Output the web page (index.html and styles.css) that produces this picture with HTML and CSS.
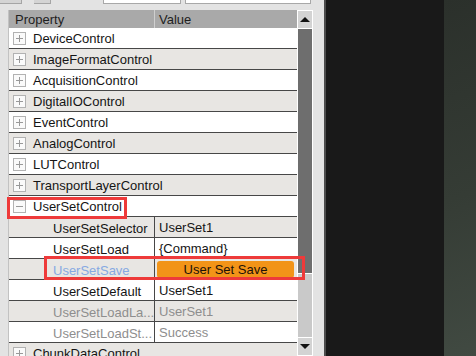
FILE: index.html
```html
<!DOCTYPE html>
<html lang="en">
<head>
    <meta charset="UTF-8">
    <title>Property Grid</title>
    <link rel="stylesheet" href="styles.css">
</head>
<body>
    <div class="screen">
        <div class="panel">
            <div class="toolbar">
                <span class="tb-btn btn-a"></span>
                <span class="tb-btn btn-b"></span>
                <span class="tb-input input-a"></span>
                <span class="tb-input input-b"></span>
            </div>
            <div class="grid-wrap">
                <div class="grid">
                    <div class="grid-head">
                        <span class="head-name">Property</span>
                        <span class="head-value">Value</span>
                    </div>
                    <div class="row group"><span class="expander plus"></span><span class="label">DeviceControl</span></div>
                    <div class="row group"><span class="expander plus"></span><span class="label">ImageFormatControl</span></div>
                    <div class="row group"><span class="expander plus"></span><span class="label">AcquisitionControl</span></div>
                    <div class="row group"><span class="expander plus"></span><span class="label">DigitalIOControl</span></div>
                    <div class="row group"><span class="expander plus"></span><span class="label">EventControl</span></div>
                    <div class="row group"><span class="expander plus"></span><span class="label">AnalogControl</span></div>
                    <div class="row group"><span class="expander plus"></span><span class="label">LUTControl</span></div>
                    <div class="row group"><span class="expander plus"></span><span class="label">TransportLayerControl</span></div>
                    <div class="row group"><span class="expander"></span><span class="label">UserSetControl</span></div>
                    <div class="row child"><span class="name">UserSetSelector</span><span class="value">UserSet1</span></div>
                    <div class="row child"><span class="name">UserSetLoad</span><span class="value">{Command}</span></div>
                    <div class="row child"><span class="name selected">UserSetSave</span><span class="value"><button class="cmd-button">User Set Save</button></span></div>
                    <div class="row child"><span class="name">UserSetDefault</span><span class="value">UserSet1</span></div>
                    <div class="row child readonly"><span class="name">UserSetLoadLa...</span><span class="value">UserSet1</span></div>
                    <div class="row child readonly"><span class="name">UserSetLoadSt...</span><span class="value">Success</span></div>
                    <div class="row group"><span class="expander plus"></span><span class="label">ChunkDataControl</span></div>
                </div>
                <div class="scrollbar">
                    <div class="sb-button"><span class="arrow-up"></span></div>
                    <div class="sb-thumb"></div>
                    <div class="sb-track"></div>
                    <div class="sb-button"><span class="arrow-down"></span></div>
                </div>
            </div>
            <div class="mark mark-group"></div>
            <div class="mark mark-save"></div>
        </div>
        <div class="split"></div>
        <div class="dark"></div>
        <div class="desk"></div>
    </div>
</body>
</html>
```

FILE: styles.css
```css
body {
    margin: 0;
    font-family: 'Liberation Sans', Arial, sans-serif;
    font-size: 13px;
    color: #151515;
    overflow: hidden;
}

.screen {
    display: flex;
    width: 476px;
    height: 356px;
    overflow: hidden;
}

.panel {
    position: relative;
    width: 324px;
    background: #e3e3e3;
}

.split {
    width: 2px;
    background: #4d4d4d;
}

.dark {
    width: 118px;
    background: #191919;
}

.desk {
    flex: 1;
    background: linear-gradient(160deg, #2b302b 0%, #353c35 55%, #414a42 100%);
}

/* clipped toolbar at the top */
.toolbar {
    display: flex;
    height: 5px;
    margin-bottom: 5px;
}

.tb-btn {
    height: 3px;
    background: #d4d4d4;
    border-right: 1px solid #a5a5a5;
    border-bottom: 1px solid #a5a5a5;
}

.btn-a { width: 21px; }
.btn-b { width: 16px; margin-left: 12px; }

.tb-input {
    height: 3px;
    background: #fff;
    border: 1px solid #a8a8a8;
    border-top: none;
}

.input-a { width: 76px; margin-left: 52px; }
.input-b { width: 124px; margin-left: 4px; }

/* property grid */
.grid-wrap {
    display: flex;
    padding-left: 8px;
    height: 346px;
    overflow: hidden;
}

.grid {
    width: 288px;
    border-left: 1px solid #c2c2c2;
}

.grid-head {
    display: flex;
    height: 18px;
    line-height: 19px;
    background: #a9a9a9;
    color: #1e1e1e;
}

.head-name {
    width: 139px;
    padding-left: 6px;
    border-right: 1px solid #cfcfcf;
}

.head-value {
    padding-left: 4px;
}

.row {
    display: flex;
    align-items: center;
    height: 20px;
    line-height: 21px;
    background: #fff;
    border-bottom: 1px solid #474747;
    white-space: nowrap;
}

.row:nth-child(odd) {
    background: #e8e6e3;
}

.label {
    padding-top: 1px;
}

.expander {
    position: relative;
    box-sizing: border-box;
    width: 13px;
    height: 13px;
    margin: 0 7px 0 4px;
    border: 1px solid #b2b2b2;
    background: #fafafa;
}

.expander::before,
.expander::after {
    content: "";
    position: absolute;
    background: #999;
}

.expander::before {
    left: 2px;
    top: 5px;
    width: 7px;
    height: 1px;
}

.plus.expander::after {
    left: 5px;
    top: 2px;
    width: 1px;
    height: 7px;
}

.expander:not(.plus)::after {
    display: none;
}

.name {
    box-sizing: border-box;
    width: 146px;
    padding-left: 44px;
    padding-top: 1px;
    border-right: 1px solid #474747;
    overflow: hidden;
    align-self: stretch;
}

.name.selected {
    color: #86a9e2;
}

.value {
    flex: 1;
    padding-left: 4px;
    padding-top: 1px;
    align-self: stretch;
    display: flex;
    align-items: center;
}

.readonly .name,
.readonly .value {
    color: #8e8e8e;
}

.cmd-button {
    width: 137px;
    height: 17px;
    margin-left: -2px;
    margin-top: -1px;
    padding: 0;
    border: none;
    border-radius: 3px;
    background: #f29418;
    color: #1c1208;
    font-family: 'Liberation Sans', Arial, sans-serif;
    font-size: 13px;
    line-height: 18px;
}

/* vertical scrollbar */
.scrollbar {
    display: flex;
    flex-direction: column;
    gap: 1px;
    width: 14px;
    border: 1px solid #fff;
    background: #fff;
}

.sb-button {
    display: flex;
    justify-content: center;
    align-items: center;
    height: 17px;
    background: #d3d3d3;
}

.sb-thumb {
    height: 244px;
    background: #6e6e6e;
}

.sb-track {
    flex: 1;
    background: #c9c9c9;
}

.arrow-up {
    width: 0;
    height: 0;
    border-left: 5px solid transparent;
    border-right: 5px solid transparent;
    border-bottom: 5px solid #111;
}

.arrow-down {
    width: 0;
    height: 0;
    border-left: 5px solid transparent;
    border-right: 5px solid transparent;
    border-top: 5px solid #111;
}

/* red annotation frames drawn over the grid */
.mark {
    position: absolute;
    box-sizing: border-box;
    border: 3px solid #ee3a3a;
}

.mark-group {
    left: 7px;
    top: 197px;
    width: 120px;
    height: 22px;
}

.mark-save {
    left: 44px;
    top: 256px;
    width: 261px;
    height: 24px;
}
```
